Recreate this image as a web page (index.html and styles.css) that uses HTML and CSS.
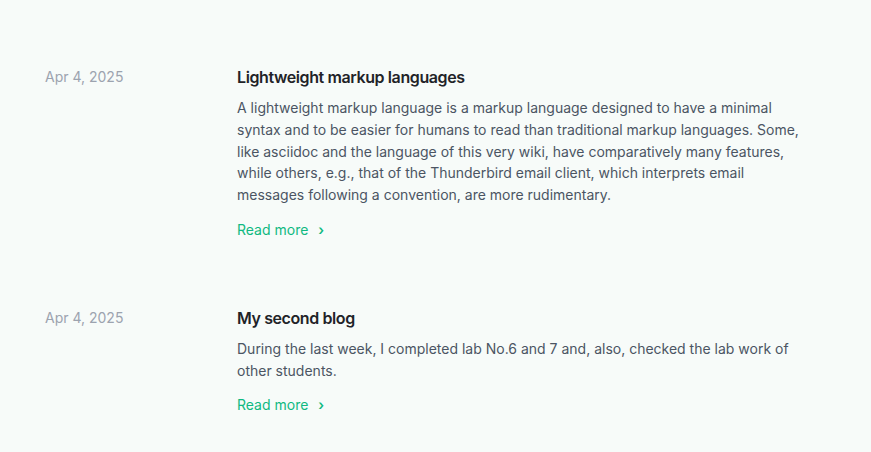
FILE: index.html
```html
<!DOCTYPE html>
<html lang="en">
<head>
<meta charset="utf-8">
<link rel="stylesheet" href="styles.css">
</head>
<body>
<main class="list">
  <article class="post">
    <time class="date">Apr 4, 2025</time>
    <div class="content">
      <h2 class="title">Lightweight markup languages</h2>
      <p class="summary">A lightweight markup language is a markup language designed to have a minimal syntax and to be easier for humans to read than traditional markup languages. Some, like asciidoc and the language of this very wiki, have comparatively many features, while others, e.g., that of the Thunderbird email client, which interprets email messages following a convention, are more rudimentary.</p>
      <a class="more" href="#">Read more <span class="chev">›</span></a>
    </div>
  </article>
  <article class="post">
    <time class="date">Apr 4, 2025</time>
    <div class="content">
      <h2 class="title">My second blog</h2>
      <p class="summary">During the last week, I completed lab No.6 and 7 and, also, checked the lab work of other students.</p>
      <a class="more" href="#">Read more <span class="chev">›</span></a>
    </div>
  </article>
</main>
</body>
</html>
```
FILE: styles.css
```css
html, body { margin: 0; padding: 0; }
body {
  background: #f7fbf9;
  font-family: Inter, "Noto Sans", sans-serif;
  color: #4b5563;
}
.list {
  padding: 65px 45px 0 45px;
  display: flex;
  flex-direction: column;
  gap: 65px;
}
.post {
  display: grid;
  grid-template-columns: 192px 576px;
}
.date {
  font-size: 14px;
  line-height: 24px;
  color: #9ca3af;
}
.title {
  margin: 0;
  font-size: 16px;
  line-height: 24px;
  font-weight: 600;
  letter-spacing: -0.025em;
  color: #1f2328;
}
.summary {
  margin: 8px 0 0;
  font-size: 14px;
  line-height: 21.75px;
}
.more {
  display: inline-block;
  margin-top: 13px;
  font-size: 14px;
  line-height: 22px;
  color: #10b981;
  text-decoration: none;
}
.chev { margin-left: 6px; font-size: 14px; font-weight: 600; }
```
